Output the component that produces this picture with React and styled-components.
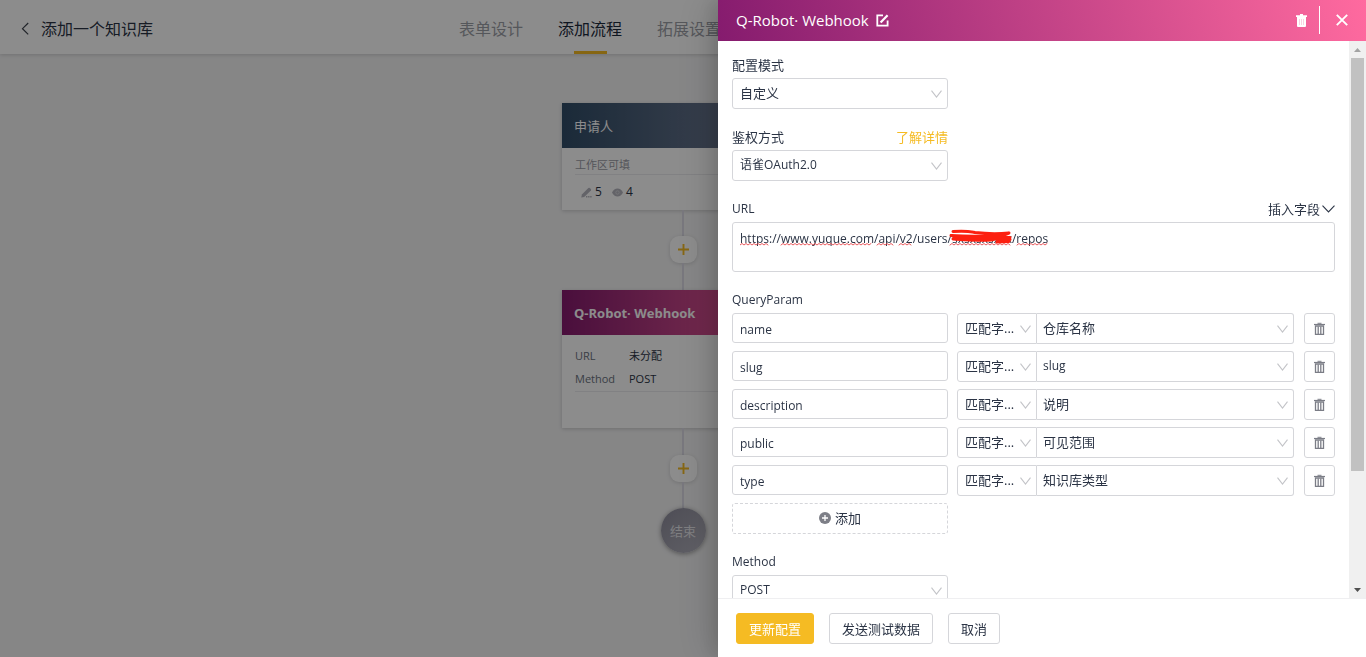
import React from "react";
import styled, { createGlobalStyle } from "styled-components";

const ink = "#2b3445";
const amber = "#f5bb23";
const border = "#d5d6da";

const GlobalStyle = createGlobalStyle`
  *, *::before, *::after { box-sizing: border-box; }
  body {
    margin: 0;
    background: #f4f4f5;
    color: ${ink};
    font-family: "Open Sans", "Noto Sans CJK SC", sans-serif;
    font-size: 13px;
    line-height: 20px;
  }
  button, input, select, textarea { font: inherit; color: inherit; }
  button { cursor: pointer; }
`;

/* ---------- editor page ---------- */

const Page = styled.div`
  min-height: 100vh;
  display: flex;
  flex-direction: column;
`;

const TopBar = styled.header`
  display: flex;
  align-items: stretch;
  height: 54px;
  padding-left: 20px;
  background: #fff;
  box-shadow: 0 1px 4px rgba(0, 0, 0, 0.16);
  font-size: 16px;
`;

const PageTitle = styled.div`
  display: flex;
  align-items: center;
  gap: 11px;
  flex: 0 0 439px;
  padding-top: 4px;
`;

const PlainButton = styled.button`
  display: flex;
  align-items: center;
  gap: ${(p) => p.$gap || 0}px;
  padding: 0;
  border: 0;
  background: none;
`;

const H1 = styled.h1`
  margin: 0;
  font-size: 16px;
  font-weight: 400;
`;

const Tabs = styled.nav`
  display: flex;
  gap: 35px;
`;

const Tab = styled.a`
  position: relative;
  display: flex;
  align-items: center;
  padding-top: 4px;
  white-space: nowrap;
  text-decoration: none;
  color: ${(p) => (p.$active ? "#1c2a3c" : "#9c9ea6")};

  &::after {
    content: "";
    position: absolute;
    bottom: 0;
    left: 16px;
    width: 33px;
    height: 3px;
    background: ${(p) => (p.$active ? amber : "transparent")};
  }
`;

const Flow = styled.main`
  display: flex;
  flex-direction: column;
  align-items: center;
  padding: 49px 0 40px;
`;

const Card = styled.section`
  width: 242px;
  background: #fff;
  box-shadow: 0 1px 4px rgba(0, 0, 0, 0.18);
`;

const CardHead = styled.h2`
  display: flex;
  align-items: center;
  height: 45px;
  margin: 0;
  padding: 0 12px;
  color: #fff;
  font-size: 13px;
  font-weight: ${(p) => (p.$strong ? 700 : 400)};
  background: ${(p) =>
    p.$strong
      ? "linear-gradient(90deg, #861b6e, #ff6aa0)"
      : "linear-gradient(90deg, #314d68, #83889f)"};
`;

const CardBody = styled.div`
  padding: ${(p) => (p.$tall ? "9px" : "8px")} 13px 0;
  height: ${(p) => (p.$tall ? "93px" : "62px")};
  font-size: 11px;
`;

const CardNote = styled.div`
  border-bottom: 1px solid #ebebee;
  color: #9b9ca6;
  line-height: 18px;
`;

const Counts = styled.div`
  display: flex;
  gap: 10px;
  padding: 7px 6px;
  font-size: 12px;
`;

const Count = styled.span`
  display: flex;
  align-items: center;
  gap: 3px;
`;

const Facts = styled.dl`
  display: grid;
  grid-template-columns: 54px 1fr;
  row-gap: 3px;
  margin: 0;
  padding: 2px 0;
  border-bottom: 1px solid #ebebee;

  dt { color: #6b7280; }
  dd { margin: 0; }
`;

const Line = styled.div`
  width: 2px;
  height: ${(p) => p.$h || 27}px;
  background: #dcdbe6;
`;

const AddNode = styled.button`
  display: grid;
  place-items: center;
  width: 27px;
  height: 27px;
  padding: 0;
  border: 0;
  border-radius: 9px;
  background: #fff;
  box-shadow: 0 1px 4px rgba(0, 0, 0, 0.14);
`;

const EndNode = styled.div`
  display: grid;
  place-items: center;
  width: 45px;
  height: 45px;
  border-radius: 50%;
  color: #e6e6ea;
  background: linear-gradient(135deg, #8c8b9a, #b3b2bd);
  box-shadow: 0 1px 5px rgba(0, 0, 0, 0.4);
`;

const Mask = styled.div`
  position: fixed;
  inset: 0;
  background: rgba(0, 0, 0, 0.45);
`;

/* ---------- drawer ---------- */

const Drawer = styled.aside`
  position: fixed;
  top: 0;
  right: 0;
  bottom: 0;
  display: flex;
  flex-direction: column;
  width: 648px;
  max-width: 100%;
  background: #fff;
  box-shadow: -6px 0 16px rgba(0, 0, 0, 0.1), -9px 0 36px rgba(0, 0, 0, 0.14);
`;

const DrawerHead = styled.header`
  display: flex;
  align-items: center;
  flex: none;
  height: 41px;
  padding: 0 18px 1px;
  color: #fff;
  background: linear-gradient(75deg, #851b6e, #ff6a9f);
`;

const DrawerTitle = styled.h2`
  margin: 0 7px 0 0;
  font-size: 15px;
  font-weight: 400;
`;

const HeadActions = styled.div`
  display: flex;
  align-items: center;
  margin-left: auto;
  gap: 12px;
`;

const Separator = styled.span`
  width: 1px;
  height: 28px;
  margin-right: 4px;
  background: #fff;
`;

const DrawerBody = styled.div`
  display: flex;
  flex: 1;
  min-height: 0;
`;

const Form = styled.form`
  flex: 1;
  min-width: 0;
  overflow-y: auto;
  scrollbar-width: none;
  padding: 11px 14px 80px;
  display: flex;
  flex-direction: column;
  gap: 15px;
`;

const Field = styled.div`
  width: ${(p) => (p.$wide ? "100%" : "216px")};
`;

const LabelRow = styled.div`
  display: flex;
  align-items: center;
  justify-content: space-between;
  height: 26px;
  font-size: ${(p) => (p.$latin ? 12 : 13)}px;
  font-weight: ${(p) => (p.$latin ? 500 : 400)};
`;

const InsertButton = styled(PlainButton)`
  font-size: 13px;
  font-weight: 400;
`;

const Link = styled.a`
  color: ${amber};
  text-decoration: none;
`;

const SelectBox = styled.div`
  position: relative;
  flex: ${(p) => (p.$grow ? "1 1 0" : "none")};
  width: ${(p) => p.$w || "100%"};

  svg {
    position: absolute;
    right: 6px;
    top: 12px;
    pointer-events: none;
  }
`;

const SelectControl = styled.select`
  display: block;
  appearance: none;
  width: 100%;
  height: 31px;
  padding: 0 20px 2px ${(p) => (p.$join === "right" ? 6 : 7)}px;
  border: 1px solid ${border};
  border-left-width: ${(p) => (p.$join === "right" ? 0 : 1)}px;
  border-radius: ${(p) =>
    p.$join === "left" ? "3px 0 0 3px" : p.$join === "right" ? "0 3px 3px 0" : "3px"};
  background: #fff;
  font-size: ${(p) => (p.$latin ? 12 : 13)}px;
`;

const TextInput = styled.input`
  flex: none;
  width: 216px;
  height: 30px;
  padding: 2px 7px 0;
  border: 1px solid ${border};
  border-radius: 3px;
  background: #fff;
  font-size: 12px;
`;

const AreaBox = styled.div`
  position: relative;

  svg {
    position: absolute;
    left: 8px;
    top: 6px;
    pointer-events: none;
  }
`;

const TextArea = styled.textarea`
  display: block;
  width: 100%;
  height: 50px;
  padding: 6px 7px;
  border: 1px solid ${border};
  border-radius: 3px;
  resize: none;
  font-size: 12px;
  line-height: 20px;
`;

const ParamList = styled.div`
  display: flex;
  flex-direction: column;
  gap: 7px;
`;

const ParamRow = styled.div`
  display: flex;
  gap: 9px;
`;

const SelectPair = styled.div`
  display: flex;
  flex: 1;
  min-width: 0;
  padding-right: 1px;
`;

const IconButton = styled.button`
  display: grid;
  place-items: center;
  flex: none;
  width: 31px;
  height: 31px;
  padding: 0;
  border: 1px solid ${border};
  border-radius: 3px;
  background: #fff;
  color: #7b7d86;
`;

const AddButton = styled.button`
  display: flex;
  align-items: center;
  justify-content: center;
  gap: 4px;
  width: 216px;
  height: 31px;
  padding: 0 0 2px;
  border: 1px dashed ${border};
  border-radius: 3px;
  background: #fff;
`;

const Scrollbar = styled.div`
  display: flex;
  flex-direction: column;
  flex: none;
  width: 17px;
  padding: 0 2px;
  background: #f0f0f0;
`;

const ScrollArrow = styled.span`
  display: grid;
  place-items: center;
  height: 17px;
`;

const ScrollTrack = styled.div`
  flex: 1;
`;

const ScrollThumb = styled.div`
  height: 79%;
  background: #c1c1c1;
`;

const DrawerFoot = styled.footer`
  display: flex;
  align-items: flex-start;
  gap: 15px;
  flex: none;
  height: 59px;
  padding: 14px 18px;
  border-top: 1px solid #efeff1;
`;

const Button = styled.button`
  height: 31px;
  padding: 0 12px;
  border: 1px solid ${(p) => (p.$primary ? amber : border)};
  border-radius: 3px;
  background: ${(p) => (p.$primary ? amber : "#fff")};
  color: ${(p) => (p.$primary ? "#fff" : ink)};
  white-space: nowrap;
`;

/* ---------- icons ---------- */

const Chevron = ({ color = "#c3c4c8", w = 11, h = 8 }) => (
  <svg width={w} height={h} viewBox={`0 0 ${w} ${h}`} fill="none" stroke={color} strokeWidth="1.1" aria-hidden="true">
    <path d={`M0.5 0.7 L${w / 2} ${h - 1} L${w - 0.5} 0.7`} />
  </svg>
);

const BackIcon = () => (
  <svg width="10" height="14" viewBox="0 0 10 14" fill="none" stroke="#3c424c" strokeWidth="1.2" aria-hidden="true">
    <path d="M8.2 1 L2.5 6.7 L8.2 12.4" />
  </svg>
);

const PlusIcon = () => (
  <svg width="13" height="13" viewBox="0 0 13 13" stroke={amber} strokeWidth="1.9" aria-hidden="true">
    <path d="M6.5 1 V12 M1 6.5 H12" />
  </svg>
);

const PencilIcon = () => (
  <svg width="11" height="11" viewBox="0 0 11 11" fill="#b5b5be" aria-hidden="true">
    <path d="M0.2 10.5 L0.9 7.6 L7.4 1 Q8.1 0.4 8.8 1 L9.9 2.1 Q10.4 2.8 9.9 3.4 L3.2 9.9 Z" />
    <path d="M5 9 H6.4 V10.5 H5 Z M7.1 9 H8.5 V10.5 H7.1 Z M9.2 9 H10.6 V10.5 H9.2 Z" />
  </svg>
);

const EyeIcon = () => (
  <svg width="11" height="9" viewBox="0 0 11 9" aria-hidden="true">
    <path d="M0 4.5 Q2 0.4 5.5 0.4 T11 4.5 Q9 8.6 5.5 8.6 T0 4.5 Z" fill="#b5b5be" />
    <circle cx="5.5" cy="4.5" r="1.7" fill="none" stroke="#dedee3" strokeWidth="0.7" />
  </svg>
);

const EditIcon = () => (
  <svg width="13" height="13" viewBox="0 0 13 13" fill="none" stroke="#fff" strokeWidth="1.8" aria-hidden="true">
    <path d="M7 1.4 H1.3 V11.7 H11.6 V6.4" />
    <path d="M4.6 8.6 L11.6 1.3" strokeWidth="2.2" />
  </svg>
);

const TrashSolid = () => (
  <svg width="11" height="13" viewBox="0 0 11 13" aria-hidden="true">
    <path d="M0 1.2 H4 V0 H7 V1.2 H11 V3 H10 V12 Q10 13 9 13 H2 Q1 13 1 12 V3 H0 Z" fill="#fff" />
    <path d="M3.5 5 V11 M5.5 5 V11 M7.5 5 V11" stroke="#f7b5cf" strokeWidth="0.6" />
  </svg>
);

const TrashOutline = () => (
  <svg width="11" height="13" viewBox="0 0 11 13" fill="none" stroke="currentColor" aria-hidden="true">
    <path d="M0 2.5 H11" strokeWidth="1.2" />
    <path d="M3.5 1.3 H7.5" strokeWidth="1" />
    <path d="M1.5 4 V12.3 H9.5 V4 Z" strokeWidth="1.3" />
    <path d="M4.2 4.5 V12 M6.8 4.5 V12" strokeWidth="1.3" />
  </svg>
);

const CloseIcon = () => (
  <svg width="12" height="12" viewBox="0 0 12 12" stroke="#fff" strokeWidth="1.9" aria-hidden="true">
    <path d="M0.8 0.8 L11.2 11.2 M11.2 0.8 L0.8 11.2" />
  </svg>
);

const AddCircle = () => (
  <svg width="12" height="12" viewBox="0 0 12 12" aria-hidden="true">
    <circle cx="6" cy="6" r="6" fill="#7d7f87" />
    <path d="M6 3 V9 M3 6 H9" stroke="#fff" strokeWidth="1.3" />
  </svg>
);

const Triangle = ({ up }) => (
  <svg width="7" height="4" viewBox="0 0 7 4" fill={up ? "#a3a3a3" : "#505050"} aria-hidden="true">
    <path d={up ? "M0 4 L3.5 0 L7 4 Z" : "M0 0 L3.5 4 L7 0 Z"} />
  </svg>
);

const zigzag = (from, to) => {
  let d = `M${from} 17`;
  for (let x = from + 2, i = 0; x <= to; x += 2, i += 1) d += ` L${x} ${i % 2 ? 17 : 15.5}`;
  return d;
};

const misspelt = [[0, 28], [41, 131], [137, 153], [159, 171], [210, 271], [277, 308]];

const UrlMarks = () => (
  <svg width="310" height="20" viewBox="0 0 310 20" fill="none" stroke="#fc2010" strokeLinecap="round" strokeLinejoin="round" aria-hidden="true">
    {misspelt.map(([a, b]) => (
      <path key={a} d={zigzag(a, b)} stroke="#e8484c" strokeWidth="0.9" />
    ))}
    <path
      d="M213 3.5 Q226 2.5 235 4.5 Q252 6.5 269 5 L264 7 Q240 9 211 7.5 Q232 10.5 251 9 L270 9.5 Q250 12.5 213 11 Q240 13 251 12 Q258 10 270 11.5 Q258 12 257 14 L269 13.5"
      strokeWidth="3"
    />
  </svg>
);

/* ---------- content ---------- */

const params = [
  ["name", "仓库名称"],
  ["slug", "slug"],
  ["description", "说明"],
  ["public", "可见范围"],
  ["type", "知识库类型"],
];

const hasLatin = (text) => /[a-z]/i.test(text);

const Select = ({ id, label, value, join, w, grow }) => (
  <SelectBox $w={w} $grow={grow}>
    <SelectControl id={id} aria-label={label} defaultValue={value} $join={join} $latin={hasLatin(value)}>
      <option>{value}</option>
    </SelectControl>
    <Chevron />
  </SelectBox>
);

export default function App() {
  return (
    <>
      <GlobalStyle />
      <Page>
        <TopBar>
          <PageTitle>
            <PlainButton type="button" aria-label="返回"><BackIcon /></PlainButton>
            <H1>添加一个知识库</H1>
          </PageTitle>
          <Tabs>
            <Tab href="#form">表单设计</Tab>
            <Tab href="#flow" $active>添加流程</Tab>
            <Tab href="#more">拓展设置</Tab>
          </Tabs>
        </TopBar>

        <Flow>
          <Card>
            <CardHead>申请人</CardHead>
            <CardBody>
              <CardNote>工作区可填</CardNote>
              <Counts>
                <Count><PencilIcon />5</Count>
                <Count><EyeIcon />4</Count>
              </Counts>
            </CardBody>
          </Card>
          <Line $h={26} />
          <AddNode type="button" aria-label="添加节点"><PlusIcon /></AddNode>
          <Line />
          <Card>
            <CardHead $strong>Q-Robot· Webhook</CardHead>
            <CardBody $tall>
              <Facts>
                <dt>URL</dt>
                <dd>未分配</dd>
                <dt>Method</dt>
                <dd>POST</dd>
              </Facts>
            </CardBody>
          </Card>
          <Line />
          <AddNode type="button" aria-label="添加节点"><PlusIcon /></AddNode>
          <Line $h={26} />
          <EndNode>结束</EndNode>
        </Flow>
      </Page>

      <Mask />

      <Drawer>
        <DrawerHead>
          <DrawerTitle>Q-Robot· Webhook</DrawerTitle>
          <PlainButton type="button" aria-label="重命名"><EditIcon /></PlainButton>
          <HeadActions>
            <PlainButton type="button" aria-label="删除"><TrashSolid /></PlainButton>
            <Separator />
            <PlainButton type="button" aria-label="关闭"><CloseIcon /></PlainButton>
          </HeadActions>
        </DrawerHead>

        <DrawerBody>
          <Form>
            <Field>
              <LabelRow><label htmlFor="mode">配置模式</label></LabelRow>
              <Select id="mode" value="自定义" />
            </Field>
            <Field>
              <LabelRow>
                <label htmlFor="auth">鉴权方式</label>
                <Link href="#auth-help">了解详情</Link>
              </LabelRow>
              <Select id="auth" value="语雀OAuth2.0" />
            </Field>
            <Field $wide>
              <LabelRow $latin>
                <label htmlFor="url">URL</label>
                <InsertButton type="button" $gap={2}>
                  插入字段<Chevron color={ink} w={13} h={8} />
                </InsertButton>
              </LabelRow>
              <AreaBox>
                <TextArea
                  id="url"
                  spellCheck={false}
                  defaultValue="https://www.yuque.com/api/v2/users/sxsxsxsxsx/repos"
                />
                <UrlMarks />
              </AreaBox>
            </Field>
            <Field $wide>
              <LabelRow $latin>QueryParam</LabelRow>
              <ParamList>
                {params.map(([name, field]) => (
                  <ParamRow key={name}>
                    <TextInput aria-label="参数名" defaultValue={name} />
                    <SelectPair>
                      <Select label="取值方式" value="匹配字..." join="left" w="80px" />
                      <Select label="字段" value={field} join="right" grow />
                    </SelectPair>
                    <IconButton type="button" aria-label="删除参数"><TrashOutline /></IconButton>
                  </ParamRow>
                ))}
                <AddButton type="button"><AddCircle />添加</AddButton>
              </ParamList>
            </Field>
            <Field>
              <LabelRow $latin><label htmlFor="method">Method</label></LabelRow>
              <Select id="method" value="POST" />
            </Field>
          </Form>
          <Scrollbar aria-hidden="true">
            <ScrollArrow><Triangle up /></ScrollArrow>
            <ScrollTrack><ScrollThumb /></ScrollTrack>
            <ScrollArrow><Triangle /></ScrollArrow>
          </Scrollbar>
        </DrawerBody>

        <DrawerFoot>
          <Button type="button" $primary>更新配置</Button>
          <Button type="button">发送测试数据</Button>
          <Button type="button">取消</Button>
        </DrawerFoot>
      </Drawer>
    </>
  );
}
